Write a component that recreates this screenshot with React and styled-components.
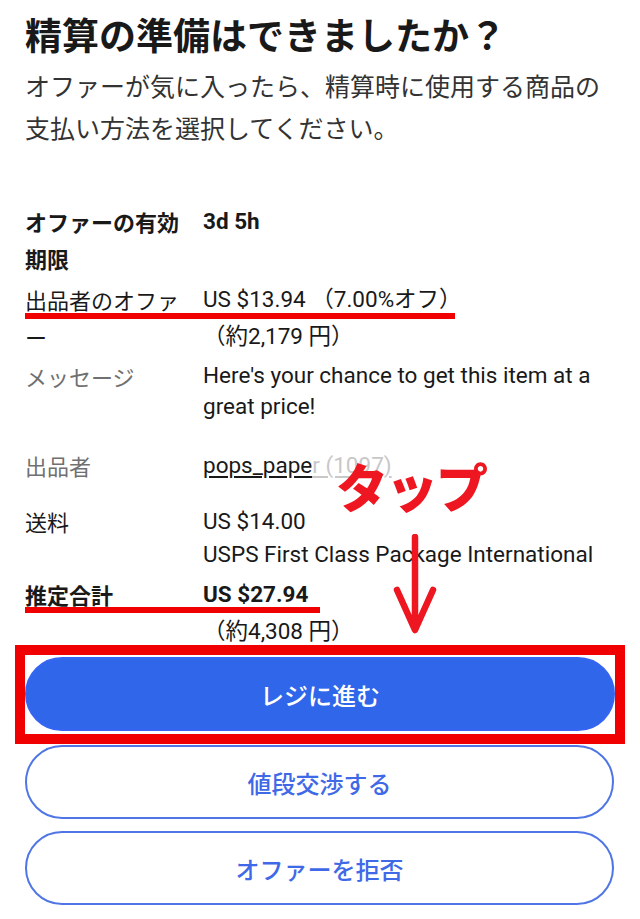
import React from 'react';
import styled, { createGlobalStyle } from 'styled-components';

const GlobalStyle = createGlobalStyle`
  html, body {
    margin: 0;
    padding: 0;
    background: #fff;
  }
  body {
    font-family: "Roboto", "Noto Sans CJK JP", sans-serif;
    color: #191919;
  }
`;

const Page = styled.div`
  position: relative;
  width: 640px;
  min-height: 919px;
  box-sizing: border-box;
  padding: 0 26px 0 25px;
  overflow: hidden;
`;

const Title = styled.h1`
  margin: 10px 0 0;
  font-family: "Noto Sans CJK JP", sans-serif;
  font-size: 37px;
  font-weight: 700;
  line-height: 48px;
  color: #191919;
`;

const Lead = styled.p`
  margin: 6px 0 0;
  font-family: "Noto Sans CJK JP", sans-serif;
  font-size: 25px;
  line-height: 42px;
  color: #333;
`;

const Details = styled.div`
  margin-top: 55px;
`;

const Row = styled.div`
  position: relative;
  display: grid;
  grid-template-columns: 160px 1fr;
  column-gap: 18px;
  margin-top: ${(p) => p.$gap || 0}px;
`;

const Label = styled.div`
  font-family: "Noto Sans CJK JP", sans-serif;
  font-size: 22px;
  line-height: 37px;
  line-break: anywhere;
  font-weight: ${(p) => (p.$bold ? 700 : 400)};
  color: ${(p) => (p.$muted ? '#707070' : '#191919')};
`;

const Value = styled.div`
  font-size: 22.5px;
  padding-top: ${(p) => (p.$tight ? 2 : 0)}px;
  font-weight: ${(p) => (p.$bold ? 700 : 400)};
  color: #191919;
`;

const Line = styled.div`
  line-height: ${(p) => p.$h || 37}px;
  font-weight: ${(p) => (p.$bold ? 700 : 'inherit')};
`;

const SellerLink = styled.span`
  text-decoration: underline;
  text-underline-offset: 3px;
  color: #191919;
`;

const Faded = styled.span`
  text-decoration: underline;
  text-underline-offset: 3px;
  color: #c8c8c8;
`;

const Marker = styled.div`
  position: absolute;
  left: 0;
  top: ${(p) => p.$top}px;
  width: ${(p) => p.$width}px;
  height: 6px;
  background: #f00000;
`;

const Highlight = styled.div`
  margin: -4px -11px 0 -10px;
  border: 10px solid #f00000;
  padding: 2px 0 3px;
`;

const Button = styled.button`
  display: flex;
  align-items: center;
  justify-content: center;
  width: 100%;
  height: 74px;
  box-sizing: border-box;
  border-radius: 37px;
  border: 2px solid ${(p) => (p.$primary ? '#3665f3' : '#4f76e4')};
  background: ${(p) => (p.$primary ? '#3066ea' : '#fff')};
  color: ${(p) => (p.$primary ? '#fff' : '#3f69e6')};
  font-family: "Noto Sans CJK JP", sans-serif;
  font-size: 24px;
  font-weight: 500;
  padding: 0;
`;

const Actions = styled.div`
  display: flex;
  flex-direction: column;
  gap: 12px;
  margin-top: 1px;
`;

const TapNote = styled.div`
  position: absolute;
  left: 336px;
  top: 460px;
  font-family: "Noto Sans CJK JP", sans-serif;
  font-size: 52px;
  font-weight: 900;
  line-height: 52px;
  letter-spacing: -2px;
  color: #ee1620;
`;

const Arrow = styled.svg`
  position: absolute;
  left: 392px;
  top: 534px;
`;

export default function App() {
  return (
    <>
      <GlobalStyle />
      <Page>
        <Title>精算の準備はできましたか？</Title>
        <Lead>オファーが気に入ったら、精算時に使用する商品の支払い方法を選択してください。</Lead>

        <Details>
          <Row>
            <Label $bold>オファーの有効期限</Label>
            <Value $bold>
              <Line>3d 5h</Line>
            </Value>
          </Row>

          <Row $gap={4}>
            <Label>出品者のオファー</Label>
            <Value>
              <Line>US $13.94 （7.00%オフ）</Line>
              <Line>（約2,179 円）</Line>
            </Value>
            <Marker $top={32} $width={430} />
          </Row>

          <Row $gap={3}>
            <Label $muted>メッセージ</Label>
            <Value $tight>
              <Line $h={31}>Here's your chance to get this item at a great price!</Line>
            </Value>
          </Row>

          <Row $gap={25}>
            <Label $muted>出品者</Label>
            <Value>
              <Line>
                <SellerLink>pops_pape</SellerLink>
                <Faded>r (1097)</Faded>
              </Line>
            </Value>
          </Row>

          <Row $gap={19}>
            <Label>送料</Label>
            <Value $tight>
              <Line $h={33}>US $14.00</Line>
              <Line $h={33}>USPS First Class Package International</Line>
            </Value>
          </Row>

          <Row $gap={5}>
            <Label $bold>推定合計</Label>
            <Value>
              <Line $bold>US $27.94</Line>
              <Line $h={36}>（約4,308 円）</Line>
            </Value>
            <Marker $top={31} $width={295} />
          </Row>
        </Details>

        <Highlight>
          <Button $primary>レジに進む</Button>
        </Highlight>
        <Actions>
          <Button>値段交渉する</Button>
          <Button>オファーを拒否</Button>
        </Actions>

        <TapNote>タップ</TapNote>
        <Arrow width="46" height="100" viewBox="0 0 46 100">
          <path
            d="M23 3 L23 95 M5 56 L23 96 L41 56"
            fill="none"
            stroke="#ee1620"
            strokeWidth="6.5"
            strokeLinecap="round"
            strokeLinejoin="round"
          />
        </Arrow>
      </Page>
    </>
  );
}
